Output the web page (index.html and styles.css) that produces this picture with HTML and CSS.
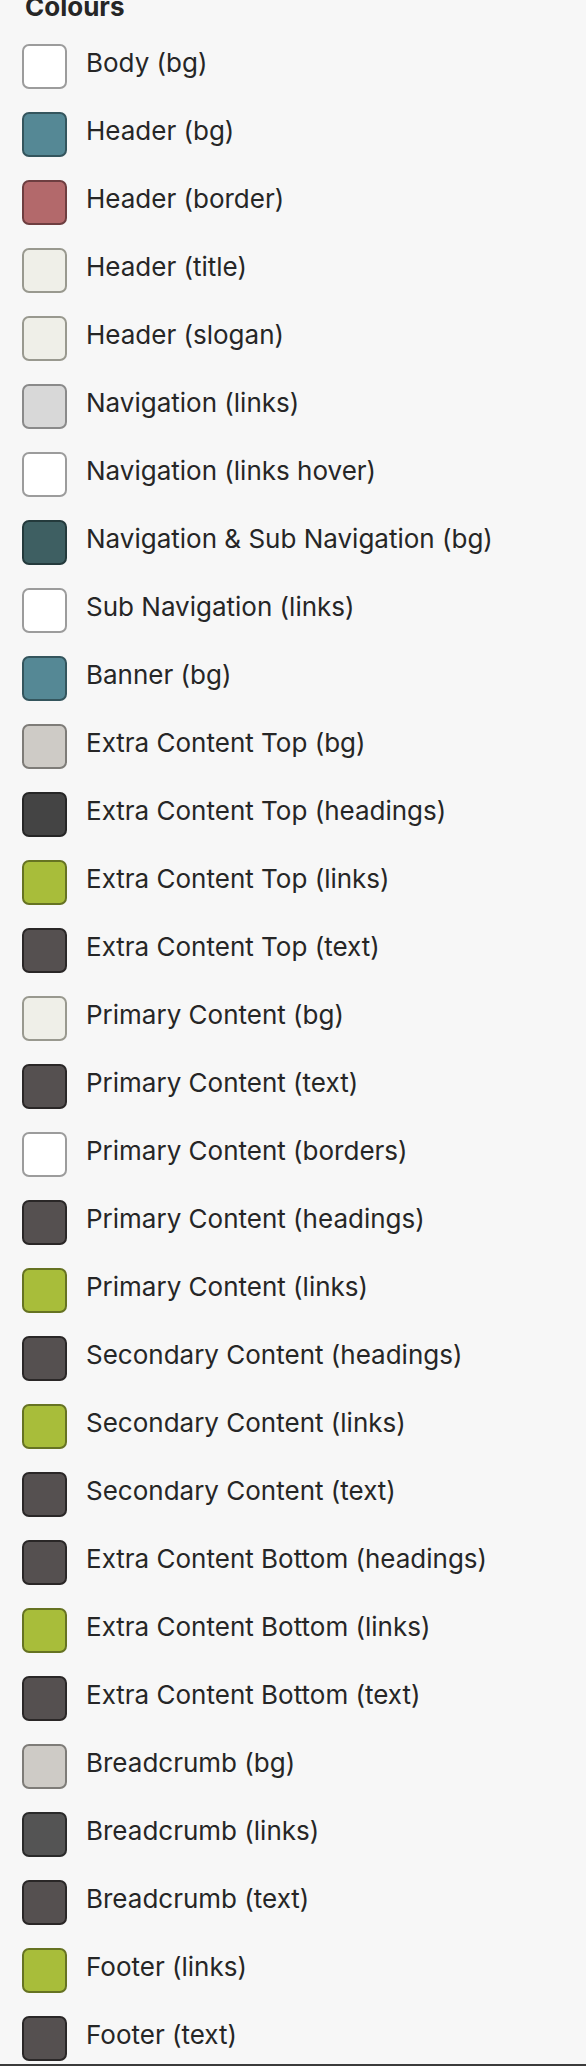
FILE: index.html
```html
<!DOCTYPE html>
<html lang="en">
<head>
    <meta charset="UTF-8">
    <meta name="viewport" content="width=device-width, initial-scale=1.0">
    <title>Theme colours</title>
    <link rel="stylesheet" href="styles.css">
</head>
<body>
    <div class="panel">
        <h3 class="panelTitle">Colours</h3>

        <ul class="colourList">
            <li class="colourRow"><span class="swatch" style="background-color:#ffffff;border-color:#9c9c9c"></span><span class="label">Body (bg)</span></li>
            <li class="colourRow"><span class="swatch" style="background-color:#558895;border-color:#34555d"></span><span class="label">Header (bg)</span></li>
            <li class="colourRow"><span class="swatch" style="background-color:#b3696b;border-color:#6e3e40"></span><span class="label">Header (border)</span></li>
            <li class="colourRow"><span class="swatch" style="background-color:#efefe8;border-color:#99998f"></span><span class="label">Header (title)</span></li>
            <li class="colourRow"><span class="swatch" style="background-color:#efefe8;border-color:#99998f"></span><span class="label">Header (slogan)</span></li>
            <li class="colourRow"><span class="swatch" style="background-color:#d8d8d8;border-color:#8a8a8a"></span><span class="label">Navigation (links)</span></li>
            <li class="colourRow"><span class="swatch" style="background-color:#ffffff;border-color:#9c9c9c"></span><span class="label">Navigation (links hover)</span></li>
            <li class="colourRow"><span class="swatch" style="background-color:#3e5f62;border-color:#243a3c"></span><span class="label">Navigation &amp; Sub Navigation (bg)</span></li>
            <li class="colourRow"><span class="swatch" style="background-color:#ffffff;border-color:#9c9c9c"></span><span class="label">Sub Navigation (links)</span></li>
            <li class="colourRow"><span class="swatch" style="background-color:#558895;border-color:#34555d"></span><span class="label">Banner (bg)</span></li>
            <li class="colourRow"><span class="swatch" style="background-color:#cecbc6;border-color:#7e7c78"></span><span class="label">Extra Content Top (bg)</span></li>
            <li class="colourRow"><span class="swatch" style="background-color:#444444;border-color:#262626"></span><span class="label">Extra Content Top (headings)</span></li>
            <li class="colourRow"><span class="swatch" style="background-color:#a8bd3a;border-color:#667322"></span><span class="label">Extra Content Top (links)</span></li>
            <li class="colourRow"><span class="swatch" style="background-color:#555050;border-color:#2a2727"></span><span class="label">Extra Content Top (text)</span></li>
            <li class="colourRow"><span class="swatch" style="background-color:#efefe8;border-color:#99998f"></span><span class="label">Primary Content (bg)</span></li>
            <li class="colourRow"><span class="swatch" style="background-color:#555050;border-color:#2a2727"></span><span class="label">Primary Content (text)</span></li>
            <li class="colourRow"><span class="swatch" style="background-color:#ffffff;border-color:#9c9c9c"></span><span class="label">Primary Content (borders)</span></li>
            <li class="colourRow"><span class="swatch" style="background-color:#555050;border-color:#2a2727"></span><span class="label">Primary Content (headings)</span></li>
            <li class="colourRow"><span class="swatch" style="background-color:#a8bd3a;border-color:#667322"></span><span class="label">Primary Content (links)</span></li>
            <li class="colourRow"><span class="swatch" style="background-color:#555050;border-color:#2a2727"></span><span class="label">Secondary Content (headings)</span></li>
            <li class="colourRow"><span class="swatch" style="background-color:#a8bd3a;border-color:#667322"></span><span class="label">Secondary Content (links)</span></li>
            <li class="colourRow"><span class="swatch" style="background-color:#555050;border-color:#2a2727"></span><span class="label">Secondary Content (text)</span></li>
            <li class="colourRow"><span class="swatch" style="background-color:#555050;border-color:#2a2727"></span><span class="label">Extra Content Bottom (headings)</span></li>
            <li class="colourRow"><span class="swatch" style="background-color:#a8bd3a;border-color:#667322"></span><span class="label">Extra Content Bottom (links)</span></li>
            <li class="colourRow"><span class="swatch" style="background-color:#555050;border-color:#2a2727"></span><span class="label">Extra Content Bottom (text)</span></li>
            <li class="colourRow"><span class="swatch" style="background-color:#cecbc6;border-color:#7e7c78"></span><span class="label">Breadcrumb (bg)</span></li>
            <li class="colourRow"><span class="swatch" style="background-color:#545454;border-color:#2a2a2a"></span><span class="label">Breadcrumb (links)</span></li>
            <li class="colourRow"><span class="swatch" style="background-color:#555050;border-color:#2a2727"></span><span class="label">Breadcrumb (text)</span></li>
            <li class="colourRow"><span class="swatch" style="background-color:#a8bd3a;border-color:#667322"></span><span class="label">Footer (links)</span></li>
            <li class="colourRow"><span class="swatch" style="background-color:#555050;border-color:#2a2727"></span><span class="label">Footer (text)</span></li>
        </ul>
    </div>

    <div class="bottomBar">Reset colours &middot; Save theme &middot; Preview</div>
</body>
</html>
```

FILE: styles.css
```css
body {
    font-family: Inter, "Noto Sans", sans-serif;
    margin: 0;
    padding: 0;
    background-color: #f7f7f7;
    color: #262626;
    overflow: hidden;
}

.panel {
    padding: 0 0 0 22px;
}

.panelTitle {
    font-size: 26px;
    font-weight: 700;
    line-height: 30px;
    margin: -8px 0 22px 3px;
}

.colourList {
    list-style: none;
    margin: 0;
    padding: 0;
    display: flex;
    flex-direction: column;
    gap: 23px;
}

.colourRow {
    display: flex;
    align-items: center;
    gap: 19px;
    height: 45px;
}

.swatch {
    width: 45px;
    height: 45px;
    box-sizing: border-box;
    border: 2px solid #999;
    border-radius: 7px;
    flex-shrink: 0;
}

.label {
    font-size: 26px;
    line-height: 30px;
    margin-top: -8px; /* text sits a little above the swatch centre */
}

.bottomBar {
    margin-top: 3px;
    height: 30px;
    background-color: #3b3b3b;
    color: #ddd;
    font-size: 20px;
    line-height: 30px;
    padding-left: 30px;
}
```
